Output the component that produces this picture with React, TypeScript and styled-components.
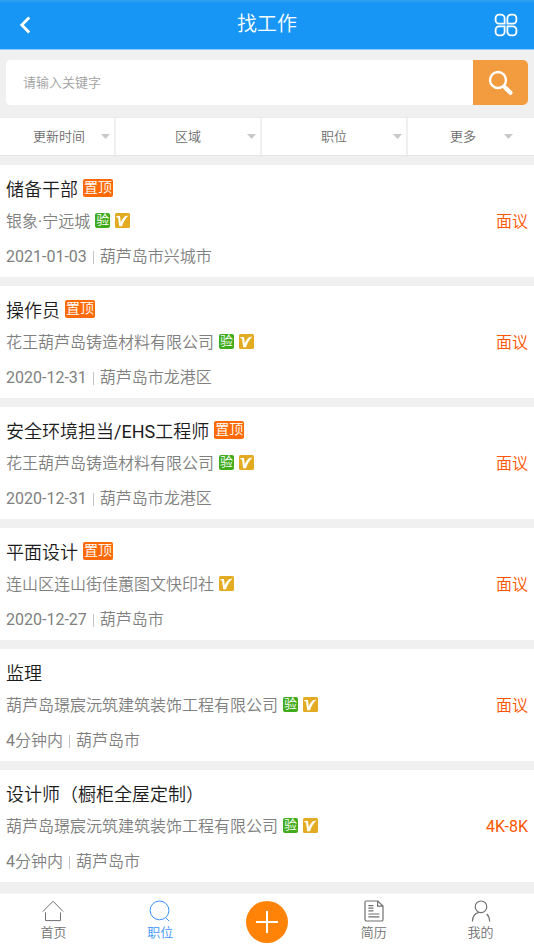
import React from "react";
import styled, { createGlobalStyle } from "styled-components";

const GlobalStyle = createGlobalStyle`
  * { box-sizing: border-box; }
  body {
    margin: 0;
    background: #f0f0f0;
    font-family: Roboto, "Noto Sans CJK SC DemiLight", "Noto Sans CJK SC", sans-serif;
    font-weight: 400;
  }
  button, input, select { font: inherit; border: 0; padding: 0; margin: 0; }
  a { text-decoration: none; }
`;

const Page = styled.div`
  display: flex;
  flex-direction: column;
  height: 100vh;
  overflow: hidden;
`;

const Header = styled.header`
  flex: none;
  display: grid;
  grid-template-columns: 50px 1fr 50px;
  height: 50px;
  background: #1796f6;
  border-top: 2px solid #2a9eec;
  border-bottom: 1px solid #8ccaf8;
`;

const Heading = styled.h1`
  margin: 0;
  color: #fff;
  font-size: 20px;
  font-weight: 400;
  line-height: 44px;
  text-align: center;
`;

const IconButton = styled.button`
  display: flex;
  align-items: center;
  justify-content: center;
  height: 45px;
  background: none;
  color: #fff;
  &:last-child { padding-right: 6px; }
`;

const SearchForm = styled.form`
  flex: none;
  display: flex;
  height: 45px;
  margin: 10px 6px 12px;
  border-radius: 5px;
  overflow: hidden;
  background: #fff;
`;

const SearchInput = styled.input`
  flex: 1;
  min-width: 0;
  padding: 0 17px;
  background: #fff;
  color: #333;
  font-size: 13px;
  outline: none;
  &::placeholder { color: #a0a0a0; opacity: 1; }
`;

const SearchButton = styled.button`
  display: flex;
  align-items: center;
  justify-content: center;
  width: 55px;
  background: #f39b3f;
`;

const Filters = styled.div`
  flex: none;
  display: grid;
  grid-template-columns: 116fr 146fr 146fr 126fr;
  height: 39px;
  margin-bottom: 9px;
  background: #fff;
  border-top: 1px solid #ebebeb;
  border-bottom: 1px solid #e6e6e6;
`;

const Filter = styled.label`
  position: relative;
  display: flex;
  border-right: 2px solid #f0f0f0;
  &:first-child { padding-left: 4px; }
  &:last-child { border-right: 0; padding-right: 16px; }
`;

const FilterSelect = styled.select`
  width: 100%;
  appearance: none;
  background: none;
  color: #6c6c6c;
  font-size: 13px;
  line-height: 36px;
  text-align: center;
  text-align-last: center;
  outline: none;
`;

const FilterArrow = styled.svg<{ $inset: number }>`
  position: absolute;
  top: 16px;
  right: ${(p) => p.$inset}px;
  pointer-events: none;
`;

const JobList = styled.main`
  flex: 1;
  min-height: 0;
  display: flex;
  flex-direction: column;
  gap: 9px;
  overflow-y: auto;
  scrollbar-width: none;
`;

const Card = styled.article`
  flex: none;
  padding: 11px 6px 8px;
  background: #fff;
`;

const TitleRow = styled.div`
  display: flex;
  align-items: center;
  gap: 5px;
  height: 28px;
`;

const Title = styled.h2`
  margin: 0;
  color: #1c1c1c;
  font-size: 18px;
  font-weight: 400;
  line-height: 28px;
`;

const TopTag = styled.span`
  height: 18px;
  padding: 0 1px;
  margin-bottom: 4px;
  border-radius: 2px;
  background: #ff6a08;
  color: #fff;
  font-size: 14px;
  line-height: 17px;
`;

const CompanyRow = styled.div`
  display: flex;
  align-items: center;
  gap: 5px;
  height: 24px;
  margin: 6px 0 11px;
`;

const Company = styled.span`
  color: #808080;
  font-size: 16px;
  line-height: 24px;
`;

const Verified = styled.span`
  width: 15px;
  height: 15px;
  margin-bottom: 4px;
  border-radius: 2px;
  background: #40ab1c;
  color: #fff;
  font-size: 13px;
  line-height: 14px;
  text-align: center;
`;

const VipMark = styled.svg`
  flex: none;
  margin-bottom: 4px;
`;

const Salary = styled.span`
  margin-left: auto;
  color: #ff5500;
  font-size: 16px;
  line-height: 24px;
`;

const Meta = styled.div`
  display: flex;
  align-items: center;
  gap: 6px;
  height: 24px;
  color: #808080;
  font-size: 16px;
  line-height: 24px;
`;

const Divider = styled.span`
  width: 1px;
  height: 13px;
  background: #c4c4c4;
`;

const TabBar = styled.nav`
  flex: none;
  display: grid;
  grid-template-columns: repeat(5, 1fr);
  height: 56px;
  background: #fff;
  border-top: 1px solid #f6f6f6;
`;

const Tab = styled.a<{ $active?: boolean }>`
  display: flex;
  flex-direction: column;
  align-items: center;
  padding-top: 6px;
  color: ${(p) => (p.$active ? "#3b94ff" : "#707070")};
  font-size: 13px;
  line-height: 22px;
`;

const AddButton = styled.button`
  display: flex;
  align-items: center;
  justify-content: center;
  align-self: center;
  justify-self: center;
  width: 42px;
  height: 42px;
  border-radius: 50%;
  background: #ff8307;
`;

interface Job {
  title: string;
  top?: boolean;
  company: string;
  verified?: boolean;
  salary: string;
  date: string;
  place: string;
}

const jobs: Job[] = [
  { title: "储备干部", top: true, company: "银象·宁远城", verified: true, salary: "面议", date: "2021-01-03", place: "葫芦岛市兴城市" },
  { title: "操作员", top: true, company: "花王葫芦岛铸造材料有限公司", verified: true, salary: "面议", date: "2020-12-31", place: "葫芦岛市龙港区" },
  { title: "安全环境担当/EHS工程师", top: true, company: "花王葫芦岛铸造材料有限公司", verified: true, salary: "面议", date: "2020-12-31", place: "葫芦岛市龙港区" },
  { title: "平面设计", top: true, company: "连山区连山街佳蕙图文快印社", salary: "面议", date: "2020-12-27", place: "葫芦岛市" },
  { title: "监理", company: "葫芦岛璟宸沅筑建筑装饰工程有限公司", verified: true, salary: "面议", date: "4分钟内", place: "葫芦岛市" },
  { title: "设计师（橱柜全屋定制）", company: "葫芦岛璟宸沅筑建筑装饰工程有限公司", verified: true, salary: "4K-8K", date: "4分钟内", place: "葫芦岛市" },
];

const filters = ["更新时间", "区域", "职位", "更多"];

const JobCard = ({ job }: { job: Job }) => (
  <Card>
    <TitleRow>
      <Title>{job.title}</Title>
      {job.top && <TopTag>置顶</TopTag>}
    </TitleRow>
    <CompanyRow>
      <Company>{job.company}</Company>
      {job.verified && <Verified>验</Verified>}
      <VipMark width="15" height="15" viewBox="0 0 15 15" aria-hidden="true">
        <rect width="15" height="15" rx="1.5" fill="#e3ab22" />
        <path d="M1.4 3H5L5.800 9.400C7 6.600 8.400 4.600 10 3.600H8.800L13.600 2.600C10.800 5 8.600 8.600 7 13.200H4.200L3 4.400 1.400 4.200Z" fill="#fff" />
      </VipMark>
      <Salary>{job.salary}</Salary>
    </CompanyRow>
    <Meta>
      <span>{job.date}</span>
      <Divider />
      <span>{job.place}</span>
    </Meta>
  </Card>
);

export default function App() {
  return (
    <Page>
      <GlobalStyle />
      <Header>
        <IconButton type="button" aria-label="返回">
          <svg width="12" height="18" viewBox="0 0 12 18" fill="none" stroke="currentColor" strokeWidth="2.8">
            <path d="M10.2 1.4 2.8 9l7.4 7.6" />
          </svg>
        </IconButton>
        <Heading>找工作</Heading>
        <IconButton type="button" aria-label="菜单">
          <svg width="24" height="24" viewBox="0 0 24 24" fill="none" stroke="currentColor" strokeWidth="1.8">
            <path d="M5 1.6h2a3.600 3.600 0 0 1 3.600 3.600v5.400H5A3.400 3.400 0 0 1 1.600 7.200V5A3.400 3.400 0 0 1 5 1.600Z" />
            <path d="M19 1.600h-2a3.600 3.600 0 0 0-3.600 3.600v5.400H19a3.400 3.400 0 0 0 3.400-3.400V5A3.400 3.400 0 0 0 19 1.600Z" />
            <path d="M5 22.400h2a3.600 3.600 0 0 0 3.600-3.600v-5.400H5a3.400 3.400 0 0 0-3.400 3.400V19A3.400 3.400 0 0 0 5 22.400Z" />
            <path d="M19 22.400h-2a3.600 3.600 0 0 1-3.600-3.600v-5.400H19a3.400 3.400 0 0 1 3.400 3.400V19a3.400 3.400 0 0 1-3.400 3.400Z" />
          </svg>
        </IconButton>
      </Header>

      <SearchForm onSubmit={(e) => e.preventDefault()}>
        <SearchInput type="text" placeholder="请输入关键字" aria-label="请输入关键字" />
        <SearchButton type="submit" aria-label="搜索">
          <svg width="26" height="26" viewBox="0 0 26 26" fill="none" stroke="#fff">
            <circle cx="10" cy="10" r="8" strokeWidth="2.4" />
            <path d="m15.4 15.6 2 2" strokeWidth="3" />
            <path d="m17.4 17.8 5 5" strokeWidth="4.4" strokeLinecap="round" />
          </svg>
        </SearchButton>
      </SearchForm>

      <Filters>
        {filters.map((name, i) => (
          <Filter key={name}>
            <FilterSelect aria-label={name}>
              <option>{name}</option>
            </FilterSelect>
            <FilterArrow $inset={i === 3 ? 21 : 4} width="9" height="5" viewBox="0 0 9 5">
              <path d="M0 0h9L4.500 5Z" fill="#c9c9c9" />
            </FilterArrow>
          </Filter>
        ))}
      </Filters>

      <JobList>
        {jobs.map((job) => (
          <JobCard key={job.title} job={job} />
        ))}
      </JobList>

      <TabBar>
        <Tab href="#home">
          <svg width="22" height="22" viewBox="0 0 22 22" fill="none" stroke="currentColor">
            <path d="M.8 11.6 11 1.2l10.2 10.4M3.5 12.4v8.2h15v-8.2" />
          </svg>
          首页
        </Tab>
        <Tab href="#jobs" $active>
          <svg width="22" height="22" viewBox="0 0 22 22" fill="none" stroke="currentColor">
            <circle cx="10.500" cy="10.400" r="9.400" />
            <path d="m16 17 4.200 4.200" />
          </svg>
          职位
        </Tab>
        <AddButton type="button" aria-label="发布">
          <svg width="24" height="24" viewBox="0 0 24 24" stroke="#fff" strokeWidth="2">
            <path d="M12 1v22M1 12h22" />
          </svg>
        </AddButton>
        <Tab href="#resume">
          <svg width="22" height="22" viewBox="0 0 22 22" fill="none" stroke="currentColor" strokeWidth="1.2">
            <path d="M3.400 1h11.400l5.200 5v13.400a1.600 1.600 0 0 1-1.600 1.600H3.600A1.600 1.600 0 0 1 2 19.400V2.400A1.400 1.400 0 0 1 3.400 1ZM14.600 1.200v5h5.200" />
            <path d="M5.400 5.600h5M5.400 8.200h5M5.400 10.800h5M5.400 14h11M5.400 16.800h11" />
          </svg>
          简历
        </Tab>
        <Tab href="#mine">
          <svg width="22" height="22" viewBox="0 0 22 22" fill="none" stroke="currentColor" strokeWidth="1.200">
            <circle cx="11" cy="6.800" r="5.800" />
            <path d="M2.400 21.600c0-4.800 2.600-8.200 6.600-9.200M16.800 14c1.800 1.800 2.800 4.400 2.800 7.600" />
          </svg>
          我的
        </Tab>
      </TabBar>
    </Page>
  );
}
